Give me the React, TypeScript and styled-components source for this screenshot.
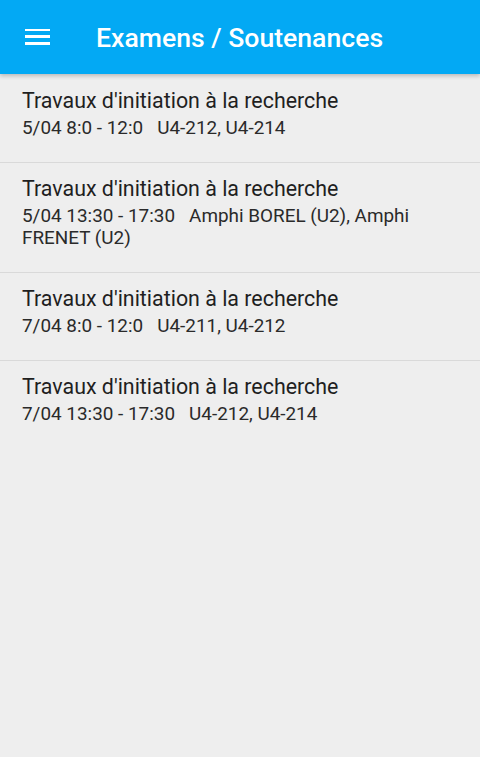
import React from "react";
import styled, { createGlobalStyle } from "styled-components";

const Global = createGlobalStyle`
  html, body { margin: 0; padding: 0; background: #eeeeee; }
  body { font-family: Roboto, "Noto Sans", sans-serif; }
  * { box-sizing: border-box; }
`;

const Page = styled.div`
  width: 480px;
  min-height: 757px;
  background: #eeeeee;
  display: flex;
  flex-direction: column;
`;

const Toolbar = styled.header`
  height: 74px;
  background: #03a9f4;
  display: flex;
  align-items: center;
  padding-left: 25px;
  box-shadow: 0 2px 4px rgba(0, 0, 0, 0.22);
  position: relative;
  z-index: 1;
`;

const MenuButton = styled.div`
  width: 25px;
  height: 16px;
  display: flex;
  flex-direction: column;
  justify-content: space-between;
  margin-right: 46px;
  margin-top: -1px;
`;

const MenuLine = styled.span`
  display: block;
  height: 2.5px;
  background: #ffffff;
`;

const Title = styled.h1`
  margin: 0;
  color: #ffffff;
  font-family: Roboto, sans-serif;
  font-weight: 500;
  font-size: 26.6px;
  letter-spacing: 0;
`;

const List = styled.ul`
  list-style: none;
  margin: 0;
  padding: 1px 0 0 0;
`;

const Row = styled.li<{ $last?: boolean }>`
  padding: 13px 22px 23px 22px;
  border-bottom: ${(p) => (p.$last ? "none" : "1px solid #d9d9d9")};
`;

const RowTitle = styled.div`
  font-size: 21.4px;
  line-height: 26px;
  color: #1f1f1f;
`;

const RowSub = styled.div`
  font-size: 18.9px;
  line-height: 22px;
  color: #2a2a2a;
  margin-top: 3px;
  white-space: pre-wrap;
`;

const items = [
  { title: "Travaux d'initiation à la recherche", sub: "5/04 8:0 - 12:0   U4-212, U4-214" },
  { title: "Travaux d'initiation à la recherche", sub: "5/04 13:30 - 17:30   Amphi BOREL (U2), Amphi FRENET (U2)" },
  { title: "Travaux d'initiation à la recherche", sub: "7/04 8:0 - 12:0   U4-211, U4-212" },
  { title: "Travaux d'initiation à la recherche", sub: "7/04 13:30 - 17:30   U4-212, U4-214" },
];

export default function App() {
  return (
    <Page>
      <Global />
      <Toolbar>
        <MenuButton>
          <MenuLine />
          <MenuLine />
          <MenuLine />
        </MenuButton>
        <Title>Examens / Soutenances</Title>
      </Toolbar>
      <List>
        {items.map((it, i) => (
          <Row key={i} $last={i === items.length - 1}>
            <RowTitle>{it.title}</RowTitle>
            <RowSub>{it.sub}</RowSub>
          </Row>
        ))}
      </List>
    </Page>
  );
}
